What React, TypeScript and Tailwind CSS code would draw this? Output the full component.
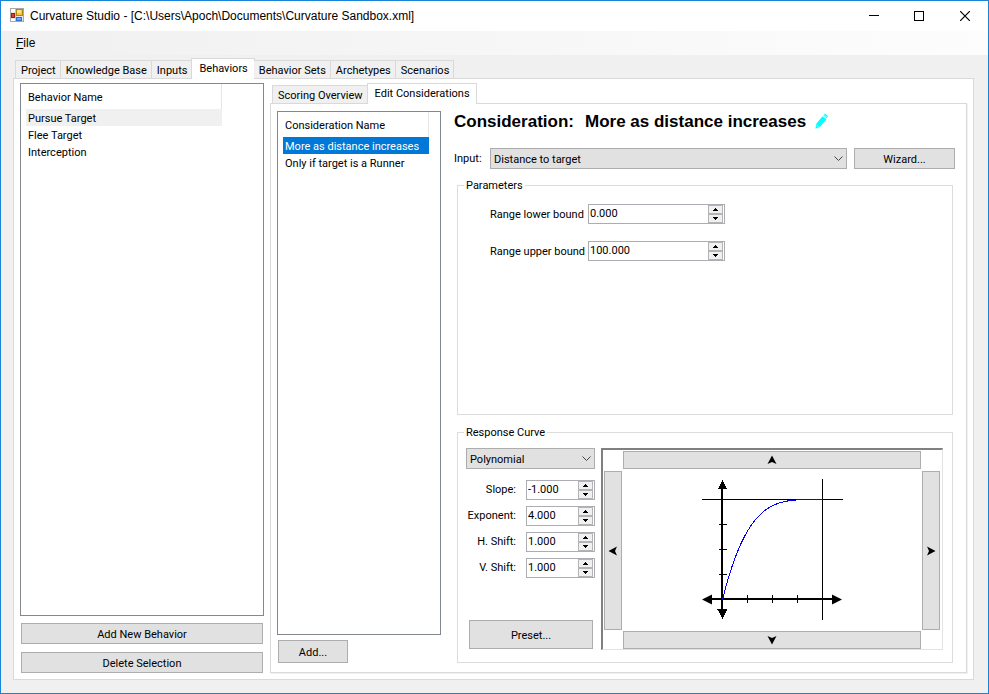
import React, { useId, useState } from "react";
import clsx from "clsx";

const raised = "border border-[#adadad] bg-[#e1e1e1]";

function AppIcon() {
  return (
    <svg width="16" height="16" viewBox="0 0 16 16" className="shrink-0" aria-hidden="true">
      <rect x="0.5" y="0.5" width="13" height="13" fill="#e8e8e8" stroke="#a8a8a8" />
      <path d="M1 1h4v3H1zM1 11h4v2H1z" fill="#fff" />
      <path d="M5.5 1v12" stroke="#c4c4c4" />
      <rect x="6.5" y="1.5" width="6" height="6" fill="#f7c531" stroke="#b8860b" />
      <path d="M7 2h4v3H7z" fill="#ffe58a" />
      <rect x="1.5" y="5.5" width="3" height="4" fill="#d9402c" stroke="#9c1d10" />
      <rect x="6.5" y="9.5" width="5" height="3" fill="#6ea8f5" stroke="#2f6bd0" />
    </svg>
  );
}

function TitleBar() {
  return (
    <header className="flex h-[30px] items-center bg-white pl-[9px]">
      <AppIcon />
      <h1 className="ml-[4px] flex-1 truncate font-['Liberation_Sans',Arial,sans-serif] text-[12px]">
        Curvature Studio - [C:\Users\Apoch\Documents\Curvature Sandbox.xml]
      </h1>
      <button aria-label="Minimize" className="flex h-full w-[44px] items-center justify-center">
        <svg width="10" height="10" shapeRendering="crispEdges"><path d="M0 4.5h10" stroke="#000" /></svg>
      </button>
      <button aria-label="Maximize" className="flex h-full w-[46px] items-center justify-center">
        <svg width="10" height="10"><rect x="0.5" y="0.5" width="9" height="9" fill="none" stroke="#000" /></svg>
      </button>
      <button aria-label="Close" className="flex h-full w-[46px] items-center justify-center">
        <svg width="10" height="10"><path d="M0 0l10 10M10 0L0 10" stroke="#000" strokeWidth="1.2" /></svg>
      </button>
    </header>
  );
}

function Tabs({ items, active, label }: { items: string[]; active: string; label: string }) {
  return (
    <div role="tablist" aria-label={label} className="relative z-10 -mb-px flex h-[21px] items-end pl-[2px]">
      {items.map((t, i) => {
        const on = t === active;
        return (
          <button
            key={t}
            role="tab"
            aria-selected={on}
            className={clsx(
              "border-[#d9d9d9] whitespace-nowrap",
              on
                ? "-mx-px h-[21px] border-x border-t bg-white pr-[6px] pb-[2px] pl-[7px]"
                : "mb-px h-[18px] border-t border-r bg-[#f0f0f0] pt-px pr-[4px] pl-[5px]",
              !on && i === 0 && "border-l"
            )}
          >
            {t}
          </button>
        );
      })}
    </div>
  );
}

function NameList({
  header,
  items,
  selected,
  focused,
}: {
  header: string;
  items: string[];
  selected: string;
  focused?: boolean;
}) {
  return (
    <div className="flex-1 border border-[#828790] bg-white pl-[5px]">
      <table className={focused ? "w-[146px] border-separate border-spacing-0" : "w-[196px] border-separate border-spacing-0"}>
        <thead>
          <tr>
            <th className="h-[25px] border-r border-[#e5e5e5] px-[2px] pt-[2px] text-left font-normal">{header}</th>
          </tr>
        </thead>
        <tbody>
          {items.map((n) => (
            <tr key={n}>
              <td
                className={clsx(
                  "h-[17px] px-[2px] pt-[2px] pb-0",
                  n === selected && (focused ? "bg-[#0078d7] text-white" : "bg-[#f0f0f0]")
                )}
              >
                {n}
              </td>
            </tr>
          ))}
        </tbody>
      </table>
    </div>
  );
}

function Combo({ id, value, label, className }: { id: string; value: string; label?: string; className?: string }) {
  return (
    <div className={clsx("relative flex", className)}>
      <select
        id={id}
        aria-label={label}
        defaultValue={value}
        className={clsx("h-[21px] w-full appearance-none pt-px pl-[3px]", raised)}
      >
        <option>{value}</option>
      </select>
      <svg width="9" height="6" className="pointer-events-none absolute top-[8px] right-[4px]" aria-hidden="true">
        <path d="M0.5 0.5l4 4 4-4" fill="none" stroke="#444" />
      </svg>
    </div>
  );
}

function PushButton({ className, children }: { className: string; children: React.ReactNode }) {
  return <button className={clsx("pt-px", raised, className)}>{children}</button>;
}

function Spinner({ id, initial, className }: { id: string; initial: string; className: string }) {
  const [value, setValue] = useState(initial);
  const step = (d: number) => setValue((v) => ((parseFloat(v) || 0) + d).toFixed(3));
  return (
    <div className={clsx("flex h-[20px] border border-[#abadb3] bg-white", className)}>
      <input
        id={id}
        value={value}
        onChange={(e) => setValue(e.target.value)}
        className="min-w-0 flex-1 pb-[2px] pl-[1px] outline-none"
      />
      <div className="flex w-[16px] flex-col pr-px">
        {[1, -1].map((d) => (
          <button
            key={d}
            aria-label={d > 0 ? "Increase" : "Decrease"}
            onClick={() => step(d)}
            className="flex flex-1 items-center justify-center border border-[#b4b4b4] bg-[#f0f0f0]"
          >
            <svg width="5" height="3" shapeRendering="crispEdges">
              <path d={d > 0 ? "M2 0h1v1h1v1h1v1H0V2h1V1h1z" : "M0 0h5v1H4v1H3v1H2V2H1V1H0z"} />
            </svg>
          </button>
        ))}
      </div>
    </div>
  );
}

function Nudge({ label, turn, className }: { label: string; turn: number; className: string }) {
  return (
    <button aria-label={label} className={clsx("flex items-center justify-center", raised, className)}>
      <svg width="10" height="10" viewBox="0 0 10 10">
        <path d="M5 0.5L9.5 9 5 7 0.5 9z" transform={`rotate(${turn} 5 5)`} />
      </svg>
    </button>
  );
}

function CurvePlot() {
  const points = Array.from({ length: 51 }, (_, i) => {
    const t = i / 50;
    return `${21.5 + t * 100},${121.5 - 100 * (1 - Math.pow(1 - t, 4))}`;
  }).join(" ");
  return (
    <svg width="142" height="142" viewBox="0 1 142 142" role="img" aria-label="Response curve">
      <g shapeRendering="crispEdges">
        <path d="M1 21.5h141M121.5 1v141" stroke="#000" />
        <path d="M20 8h2v126h-2zM8 120h126v2H8z" />
        <path d="M18 46.5h8M18 71.5h8M18 96.5h8M46.5 117v8M71.5 117v8M96.5 117v8" stroke="#000" />
        <path d="M21 2h1v2h1v2h1v2h1v2h1v1h-9v-1h1V8h1V6h1V4h1zM16 131h10v2h-1v2h-1v2h-1v2h-1v2h-1v-2h-1v-2h-1v-2h-1v-2h-1z" />
      </g>
      <path d="M1 121.5l10-5v10zM141 121.5l-10-5v10z" />
      <polyline points={points} fill="none" stroke="#0000ff" strokeWidth="1" shapeRendering="crispEdges" />
    </svg>
  );
}

function CurveFrame() {
  return (
    <div className="grid h-[202px] flex-1 grid-cols-[18px_1fr_18px] grid-rows-[18px_1fr_18px] gap-px border-t-2 border-r border-b border-l-2 border-t-[#808080] border-r-[#e3e3e3] border-b-[#e3e3e3] border-l-[#808080] pt-px pr-[2px] pl-px">
      <Nudge label="Move up" turn={0} className="col-start-2" />
      <Nudge label="Move left" turn={270} className="col-start-1 row-start-2 mt-px" />
      <div className="col-start-2 row-start-2 flex items-center justify-center">
        <CurvePlot />
      </div>
      <Nudge label="Move right" turn={90} className="col-start-3 row-start-2 mt-px" />
      <Nudge label="Move down" turn={180} className="col-start-2 row-start-3" />
    </div>
  );
}

function Group({ title, className, children }: { title: string; className: string; children: React.ReactNode }) {
  return (
    <fieldset className={clsx("mr-[2px] ml-[3px] min-w-0 border border-[#dcdcdc]", className)}>
      <legend className="ml-[6px] px-[2px] leading-[15px]">{title}</legend>
      {children}
    </fieldset>
  );
}

function Pencil() {
  return (
    <svg width="14" height="16" viewBox="0 0 14 16" aria-hidden="true">
      <path d="M7.5 3.2l4 3L4.8 14 .5 15.8 1.3 10.8z" fill="#00ffff" />
      <path d="M8.3 2.4L10 .4l3 2.6-1.4 2.2z" fill="#00ffff" />
      <path d="M1.6 12.2l2 1.6" stroke="#fff" strokeWidth="0.7" />
      <path d="M9 1.6l3.2 2.6" stroke="#fff" strokeWidth="0.5" />
    </svg>
  );
}

function CurveField({ label, value }: { label: string; value: string }) {
  const id = useId();
  return (
    <div className="flex items-center justify-end">
      <label htmlFor={id} className="mr-[10px] pb-[2px]">{label}</label>
      <Spinner id={id} initial={value} className="w-[69px]" />
    </div>
  );
}

function RangeField({ label, value }: { label: string; value: string }) {
  const id = useId();
  return (
    <div className="flex items-center">
      <label htmlFor={id} className="w-[98px] whitespace-nowrap">{label}</label>
      <Spinner id={id} initial={value} className="w-[137px]" />
    </div>
  );
}

function ConsiderationEditor() {
  return (
    <section className="flex min-w-0 flex-1 flex-col">
      <h2 className="flex h-[20px] items-center font-['Liberation_Sans',Arial,sans-serif] text-[17px] font-bold text-black">
        <span className="w-[131px]">Consideration:</span>
        <span className="whitespace-nowrap">More as distance increases</span>
        <button aria-label="Rename consideration" className="ml-[9px]"><Pencil /></button>
      </h2>
      <div className="mt-[17px] flex items-center">
        <label htmlFor="input-axis" className="w-[36px]">Input:</label>
        <Combo id="input-axis" value="Distance to target" className="min-w-0 flex-1" />
        <PushButton className="ml-[7px] h-[21px] w-[101px]">Wizard...</PushButton>
      </div>
      <Group title="Parameters" className="mt-[9px] flex-1">
        <div className="flex flex-col gap-[17px] pt-[11px] pl-[32px]">
          <RangeField label="Range lower bound" value="0.000" />
          <RangeField label="Range upper bound" value="100.000" />
        </div>
      </Group>
      <Group title="Response Curve" className="mt-[10px]">
        <div className="flex pt-[8px] pr-[9px] pb-[12px] pl-[8px]">
          <div className="mr-[6px] flex w-[129px] flex-col pb-px">
            <Combo id="curve-type" label="Curve type" value="Polynomial" />
            <div className="mt-[11px] flex flex-col gap-[6px]">
              <CurveField label="Slope:" value="-1.000" />
              <CurveField label="Exponent:" value="4.000" />
              <CurveField label="H. Shift:" value="1.000" />
              <CurveField label="V. Shift:" value="1.000" />
            </div>
            <PushButton className="mt-auto mr-[2px] ml-[3px] h-[29px]">Preset...</PushButton>
          </div>
          <CurveFrame />
        </div>
      </Group>
    </section>
  );
}

export default function App() {
  return (
    <div className="flex min-h-screen flex-col border border-[#1883d7] bg-[#f0f0f0] font-[Roboto,'Liberation_Sans',sans-serif] text-[11px] leading-[15px] text-black">
      <TitleBar />
      <nav className="flex h-[24px] items-center bg-linear-to-r from-[#f0f0f0] to-[#fdfdfd] pl-[15px]">
        <button className="font-['Liberation_Sans',Arial,sans-serif] text-[12px]"><u>F</u>ile</button>
      </nav>
      <main className="flex flex-1 flex-col pt-[3px] pr-[14px] pb-[13px] pl-[12px]">
        <Tabs
          label="Editor"
          items={["Project", "Knowledge Base", "Inputs", "Behaviors", "Behavior Sets", "Archetypes", "Scenarios"]}
          active="Behaviors"
        />
        <div role="tabpanel" className="flex flex-1 gap-[6px] border border-[#d9d9d9] bg-white pt-[4px] pr-[6px] pb-[6px] pl-[6px]">
          <aside className="flex w-[244px] flex-col">
            <NameList header="Behavior Name" items={["Pursue Target", "Flee Target", "Interception"]} selected="Pursue Target" />
            <div className="flex flex-col gap-[8px] px-px pt-[7px]">
              <PushButton className="h-[21px]">Add New Behavior</PushButton>
              <PushButton className="h-[21px]">Delete Selection</PushButton>
            </div>
          </aside>
          <div className="flex min-w-0 flex-1 flex-col">
            <Tabs label="Behavior" items={["Scoring Overview", "Edit Considerations"]} active="Edit Considerations" />
            <div role="tabpanel" className="flex flex-1 gap-[13px] border border-[#d9d9d9] bg-white pt-[7px] pr-[11px] pb-[9px] pl-[6px] shadow-[1px_1px_0_#f0f0f0]">
              <div className="flex w-[164px] flex-col">
                <NameList
                  header="Consideration Name"
                  items={["More as distance increases", "Only if target is a Runner"]}
                  selected="More as distance increases"
                  focused
                />
                <PushButton className="mt-[5px] ml-px h-[23px] w-[70px]">Add...</PushButton>
              </div>
              <ConsiderationEditor />
            </div>
          </div>
        </div>
      </main>
    </div>
  );
}
